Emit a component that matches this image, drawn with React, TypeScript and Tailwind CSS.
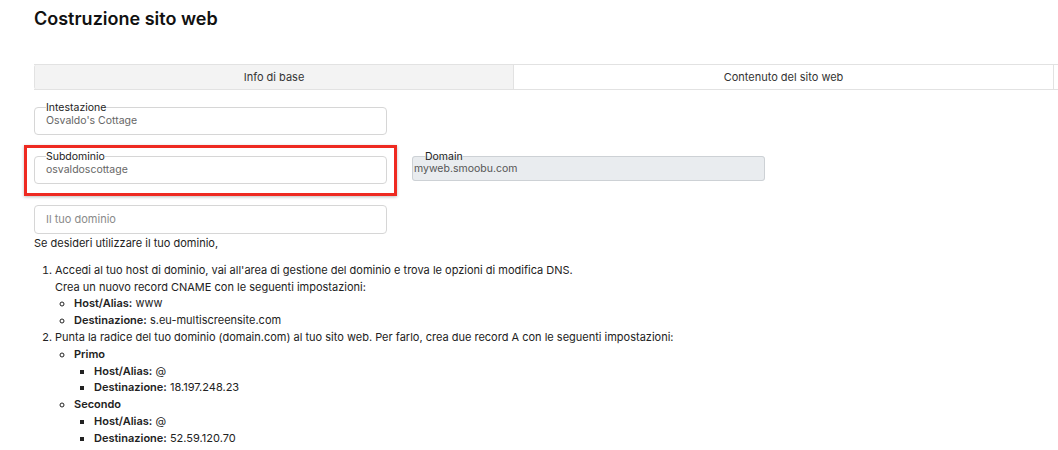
import React from 'react';

const font = { fontFamily: 'Inter, "Noto Sans", sans-serif' };

function OutlinedField({ label, value, placeholder }: { label?: string; value?: string; placeholder?: string }) {
  if (!label) {
    return (
      <div className="w-[353px] h-[29px] border border-[#d6d6d6] rounded-[4px] px-[11px] flex items-center text-[11px] text-[#8a8a8a]">
        {placeholder}
      </div>
    );
  }
  return (
    <fieldset className="w-[353px] h-[33px] border border-[#d6d6d6] rounded-[4px] px-[11px] m-0 min-w-0">
      <legend className="text-[10.5px] leading-[11px] text-[#222] px-0">{label}</legend>
      <div className="text-[10.5px] leading-[13px] text-[#666] mt-[1px]">{value}</div>
    </fieldset>
  );
}

export default function App() {
  return (
    <div className="w-[1058px] h-[450px] overflow-hidden bg-white text-[#222]" style={font}>
      <div className="pl-[34px] pt-[9px]">
        <h1 className="text-[18px] leading-[20px] font-semibold text-[#111]">Costruzione sito web</h1>

        {/* tabs */}
        <div className="mt-[35px] flex h-[26px] border-y border-[#e2e2e2] text-[11px] text-[#333] w-[1100px]">
          <div className="w-[479px] shrink-0 bg-[#f3f3f3] border-l border-[#e2e2e2] flex items-center justify-center rounded-l-[2px]">
            Info di base
          </div>
          <div className="w-[541px] shrink-0 border-l border-r border-[#e2e2e2] flex items-center justify-center">
            Contenuto del sito web
          </div>
          <div className="flex-1" />
        </div>

        {/* fields */}
        <div className="mt-[12px] flex flex-col">
          <OutlinedField label="Intestazione" value="Osvaldo's Cottage" />

          <div className="mt-[16px] flex items-start gap-[25px]">
            <div className="relative">
              <div className="absolute -left-[10px] -top-[6px] w-[373px] h-[51px] border-[3.5px] border-[#ee2a21] shadow-[0_1px_3px_rgba(0,0,0,0.25)] pointer-events-none" />
              <OutlinedField label="Subdominio" value="osvaldoscottage" />
            </div>
            <fieldset className="w-[353px] h-[30px] border border-[#cdd1d5] bg-[#e9ecef] rounded-[3px] pl-[1px] pr-[11px] m-0 min-w-0">
              <legend className="text-[10.5px] leading-[11px] text-[#222] ml-[11px] px-0">Domain</legend>
              <div className="text-[10.5px] leading-[13px] text-[#555]">myweb.smoobu.com</div>
            </fieldset>
          </div>

          <div className="mt-[21px]">
            <OutlinedField placeholder="Il tuo dominio" />
          </div>
        </div>

        {/* instructions */}
        <div className="mt-[1px] text-[11px] leading-[16.8px] text-[#222]">
          <p>Se desideri utilizzare il tuo dominio,</p>
          <ol className="mt-[10px] pl-[21px] list-decimal">
            <li>
              Accedi al tuo host di dominio, vai all'area di gestione del dominio e trova le opzioni di modifica DNS.
              <br />
              Crea un nuovo record CNAME con le seguenti impostazioni:
              <ul className="list-[circle] pl-[19px]">
                <li><span className="font-semibold">Host/Alias:</span> www</li>
                <li><span className="font-semibold">Destinazione:</span> s.eu-multiscreensite.com</li>
              </ul>
            </li>
            <li>
              Punta la radice del tuo dominio (domain.com) al tuo sito web. Per farlo, crea due record A con le seguenti impostazioni:
              <ul className="list-[circle] pl-[19px]">
                <li>
                  <span className="font-semibold">Primo</span>
                  <ul className="list-[square] pl-[20px]">
                    <li><span className="font-semibold">Host/Alias:</span> @</li>
                    <li><span className="font-semibold">Destinazione:</span> 18.197.248.23</li>
                  </ul>
                </li>
                <li>
                  <span className="font-semibold">Secondo</span>
                  <ul className="list-[square] pl-[20px]">
                    <li><span className="font-semibold">Host/Alias:</span> @</li>
                    <li><span className="font-semibold">Destinazione:</span> 52.59.120.70</li>
                  </ul>
                </li>
              </ul>
            </li>
          </ol>
        </div>
      </div>
    </div>
  );
}
